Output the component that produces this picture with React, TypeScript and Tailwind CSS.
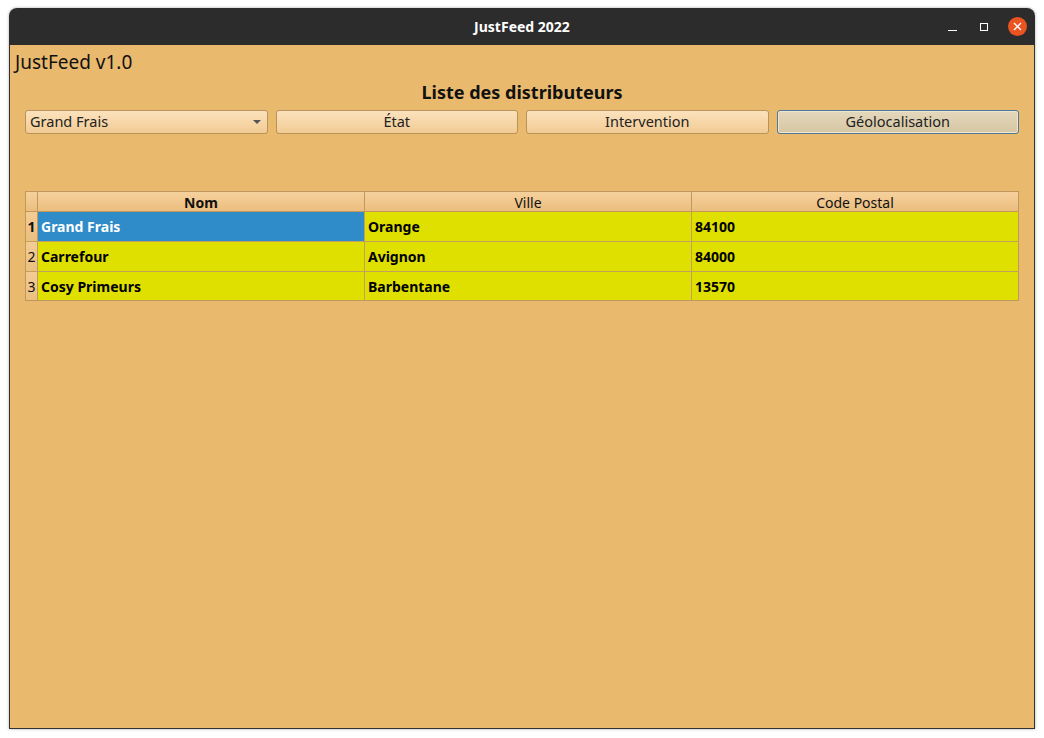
import React from 'react';

const rows = [
  { id: 1, nom: 'Grand Frais', ville: 'Orange', cp: '84100', selected: true },
  { id: 2, nom: 'Carrefour', ville: 'Avignon', cp: '84000', selected: false },
  { id: 3, nom: 'Cosy Primeurs', ville: 'Barbentane', cp: '13570', selected: false },
];

function TitleBar() {
  return (
    <div className="relative h-[37px] bg-[#2c2c2c] flex items-center justify-center">
      <span className="text-white font-bold text-[14px]">JustFeed 2022</span>
      <div className="absolute right-[8px] top-0 h-full flex items-center gap-[20px]">
        <span className="w-[9px] h-[1px] bg-white mt-[8px]" />
        <span className="w-[8px] h-[8px] border border-white ml-[3px]" />
        <span className="w-[19px] h-[19px] rounded-full bg-[#e95420] flex items-center justify-center">
          <svg width="9" height="9" viewBox="0 0 9 9">
            <path d="M1 1 L8 8 M8 1 L1 8" stroke="white" strokeWidth="1.4" />
          </svg>
        </span>
      </div>
    </div>
  );
}

function Toolbar() {
  const btn =
    'h-[24px] rounded-[3px] border border-[#b8935a] bg-gradient-to-b from-[#fbe2bd] to-[#f2cb93] flex items-center justify-center text-[14.5px] text-[#222]';
  return (
    <div className="grid grid-cols-4 gap-[8px] px-[15px]">
      <div className="h-[24px] rounded-[3px] border border-[#b8935a] bg-gradient-to-b from-[#fbe2bd] to-[#f2cb93] flex items-center justify-between pl-[4px] pr-[6px] text-[14.5px] text-[#222]">
        <span>Grand Frais</span>
        <svg width="8" height="5" viewBox="0 0 8 5">
          <path d="M0 0 L8 0 L4 4 Z" fill="#555" />
        </svg>
      </div>
      <div className={btn}>État</div>
      <div className={btn}>Intervention</div>
      <div className="h-[24px] rounded-[3px] border border-[#4d7896] bg-gradient-to-b from-[#e4d8bd] to-[#d6c6a2] flex items-center justify-center text-[14.5px] text-[#222] shadow-[inset_0_0_0_1px_#efe6d2]">
        Géolocalisation
      </div>
    </div>
  );
}

function Table() {
  return (
    <div className="mx-[15px] border border-[#c1985c] bg-[#e9b96e]">
      <div className="grid grid-cols-[12px_327px_327px_1fr] h-[20px] bg-gradient-to-b from-[#f6d19d] to-[#ebbd7e] text-[14px] text-[#111] border-b border-[#c1985c]">
        <div className="border-r border-[#c1985c]" />
        <div className="flex items-center justify-center font-bold border-r border-[#c1985c]">Nom</div>
        <div className="flex items-center justify-center border-r border-[#c1985c]">Ville</div>
        <div className="flex items-center justify-center">Code Postal</div>
      </div>
      {rows.map((r, i) => (
        <div
          key={r.id}
          className={`grid grid-cols-[12px_327px_327px_1fr] ${i < 2 ? 'h-[30px] border-b border-[#c1a15c]' : 'h-[28px]'} text-[14px]`}
        >
          <div
            className={`flex items-center justify-center bg-gradient-to-b from-[#f3cc95] to-[#ebbf80] border-r border-[#c1985c] text-[#111] ${r.selected ? 'font-bold' : ''}`}
          >
            {r.id}
          </div>
          <div
            className={`flex items-center pl-[3px] font-bold border-r border-[#c1a15c] ${r.selected ? 'bg-[#2f8cc8] text-white' : 'bg-[#e0e000] text-black'}`}
          >
            {r.nom}
          </div>
          <div className="flex items-center pl-[3px] font-bold bg-[#e0e000] text-black border-r border-[#c1a15c]">
            {r.ville}
          </div>
          <div className="flex items-center pl-[3px] font-bold bg-[#e0e000] text-black">{r.cp}</div>
        </div>
      ))}
    </div>
  );
}

export default function App() {
  return (
    <div
      className="w-[1044px] h-[738px] bg-white pt-[8px] pl-[9px]"
      style={{ fontFamily: '"Noto Sans", "DejaVu Sans", sans-serif' }}
    >
      <div className="w-[1026px] h-[721px] rounded-t-[8px] overflow-hidden flex flex-col shadow-[0_0_3px_rgba(0,0,0,0.35)]">
        <TitleBar />
        <div className="flex-1 bg-[#e9b96e] border-x border-b border-[#333]">
          <div className="pl-[5px] pt-[6px] text-[19px] leading-[22px] text-[#111]">JustFeed v1.0</div>
          <div className="text-center font-bold text-[18px] leading-[22px] text-[#111] mt-[8px]">
            Liste des distributeurs
          </div>
          <div className="mt-[7px]">
            <Toolbar />
          </div>
          <div className="mt-[57px]">
            <Table />
          </div>
        </div>
      </div>
    </div>
  );
}
